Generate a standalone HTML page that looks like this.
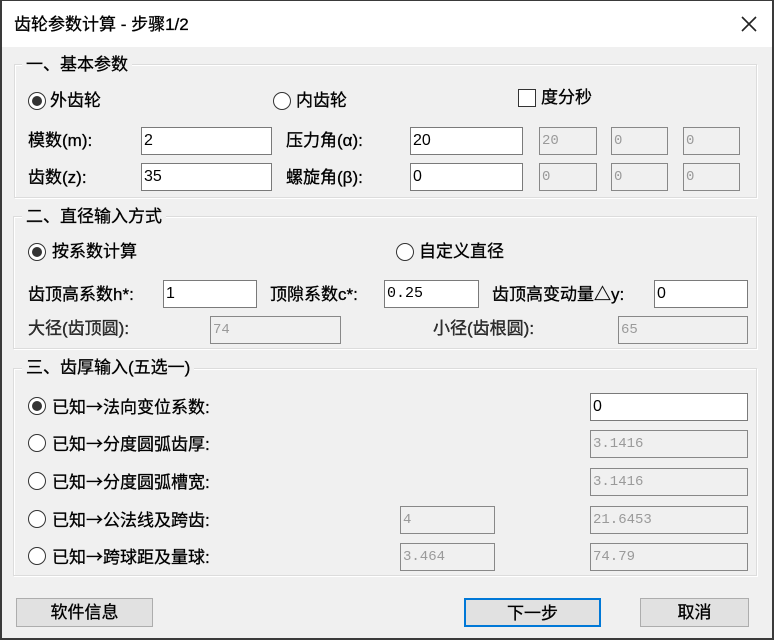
<!DOCTYPE html>
<html><head><meta charset="utf-8"><style>
*{box-sizing:border-box;margin:0;padding:0}
body{width:774px;height:640px;background:#f0f0f0;font-family:"Liberation Sans","Noto Sans CJK SC",sans-serif;font-size:17px;color:#000;position:relative;overflow:hidden}
.frame{position:absolute;left:0;top:0;width:774px;height:640px;border:2px solid #3a3a3a;border-top-width:1px}
.title{position:absolute;left:0;top:0;width:774px;height:47px;background:#fff}
.a{position:absolute;white-space:nowrap;line-height:20px;-webkit-text-stroke:0.3px #000}
.ar{font-family:"Noto Sans CJK SC",sans-serif}
.g{position:absolute;border:1px solid #dcdcdc;box-shadow:inset 1px 1px 0 #fff,1px 1px 0 #fff}
.gh{position:absolute;background:#f0f0f0;padding:0 4px;line-height:20px;white-space:nowrap;-webkit-text-stroke:0.3px #000}
.in{position:absolute;height:28px;border:1px solid #7a7a7a;background:#fff;font-size:16px;line-height:26px;padding-left:2px}
.dis{background:#f0f0f0;color:#9a9a9a;border-color:#888;font-family:"Liberation Mono",monospace;font-size:14px}
.r{position:absolute;width:18px;height:18px;border:1px solid #333;border-radius:50%;background:#fff}
.r.on::after{content:"";position:absolute;left:3px;top:3px;width:10px;height:10px;border-radius:50%;background:#333}
.btn{position:absolute;height:29px;border:1px solid #adadad;background:#e1e1e1;text-align:center;line-height:27px;-webkit-text-stroke:0.3px #000}
</style></head><body>
<div class="title"></div>
<div class="a" style="left:14px;top:15px">齿轮参数计算 - 步骤1/2</div>
<svg style="position:absolute;left:740px;top:15px" width="18" height="18"><path d="M2 2L16 16M16 2L2 16" stroke="#222" stroke-width="1.6"/></svg>

<div class="g" style="left:14px;top:64px;width:743px;height:134px"></div>
<div class="gh" style="left:22px;top:55px">一、基本参数</div>
<div class="r on" style="left:28px;top:92px"></div><div class="a" style="left:50px;top:91px">外齿轮</div>
<div class="r" style="left:273px;top:92px"></div><div class="a" style="left:296px;top:91px">内齿轮</div>
<div style="position:absolute;left:518px;top:89px;width:18px;height:18px;border:1px solid #333;background:#fff"></div><div class="a" style="left:541px;top:88px">度分秒</div>
<div class="a" style="left:28px;top:131px">模数(m):</div>
<div class="in" style="left:141px;top:127px;width:131px">2</div>
<div class="a" style="left:286px;top:131px">压力角(α):</div>
<div class="in" style="left:410px;top:127px;width:113px">20</div>
<div class="in dis" style="left:539px;top:127px;width:58px">20</div>
<div class="in dis" style="left:611px;top:127px;width:57px">0</div>
<div class="in dis" style="left:683px;top:127px;width:57px">0</div>
<div class="a" style="left:28px;top:168px">齿数(z):</div>
<div class="in" style="left:141px;top:163px;width:131px">35</div>
<div class="a" style="left:286px;top:168px">螺旋角(β):</div>
<div class="in" style="left:410px;top:163px;width:113px">0</div>
<div class="in dis" style="left:539px;top:163px;width:58px">0</div>
<div class="in dis" style="left:611px;top:163px;width:57px">0</div>
<div class="in dis" style="left:683px;top:163px;width:57px">0</div>

<div class="g" style="left:13px;top:216px;width:744px;height:133px"></div>
<div class="gh" style="left:22px;top:207px">二、直径输入方式</div>
<div class="r on" style="left:28px;top:243px"></div><div class="a" style="left:52px;top:242px">按系数计算</div>
<div class="r" style="left:396px;top:243px"></div><div class="a" style="left:419px;top:242px">自定义直径</div>
<div class="a" style="left:28px;top:285px">齿顶高系数h*:</div>
<div class="in" style="left:163px;top:280px;width:94px">1</div>
<div class="a" style="left:270px;top:285px">顶隙系数c*:</div>
<div class="in" style="left:384px;top:280px;width:95px;font-family:'Liberation Mono',monospace;font-size:15px">0.25</div>
<div class="a" style="left:492px;top:285px">齿顶高变动量△y:</div>
<div class="in" style="left:654px;top:280px;width:94px">0</div>
<div class="a" style="left:28px;top:319px;color:#333">大径(齿顶圆):</div>
<div class="in dis" style="left:210px;top:316px;width:131px">74</div>
<div class="a" style="left:433px;top:319px;color:#333">小径(齿根圆):</div>
<div class="in dis" style="left:618px;top:316px;width:130px">65</div>

<div class="g" style="left:13px;top:368px;width:744px;height:208px"></div>
<div class="gh" style="left:22px;top:358px">三、齿厚输入(五选一)</div>
<div class="r on" style="left:28px;top:397px"></div><div class="a" style="left:52px;top:396px">已知<span class="ar">→</span>法向变位系数:</div>
<div class="in" style="left:590px;top:393px;width:158px">0</div>
<div class="r" style="left:28px;top:434px"></div><div class="a" style="left:52px;top:433px">已知<span class="ar">→</span>分度圆弧齿厚:</div>
<div class="in dis" style="left:590px;top:430px;width:158px">3.1416</div>
<div class="r" style="left:28px;top:472px"></div><div class="a" style="left:52px;top:471px">已知<span class="ar">→</span>分度圆弧槽宽:</div>
<div class="in dis" style="left:590px;top:468px;width:158px">3.1416</div>
<div class="r" style="left:28px;top:510px"></div><div class="a" style="left:52px;top:509px">已知<span class="ar">→</span>公法线及跨齿:</div>
<div class="in dis" style="left:400px;top:506px;width:95px">4</div>
<div class="in dis" style="left:590px;top:506px;width:158px">21.6453</div>
<div class="r" style="left:28px;top:547px"></div><div class="a" style="left:52px;top:546px">已知<span class="ar">→</span>跨球距及量球:</div>
<div class="in dis" style="left:400px;top:543px;width:95px">3.464</div>
<div class="in dis" style="left:590px;top:543px;width:158px">74.79</div>

<div class="btn" style="left:16px;top:598px;width:137px">软件信息</div>
<div class="btn" style="left:464px;top:598px;width:137px;border:2px solid #0078d7">下一步</div>
<div class="btn" style="left:640px;top:598px;width:109px">取消</div>
<div class="frame"></div>
</body></html>
